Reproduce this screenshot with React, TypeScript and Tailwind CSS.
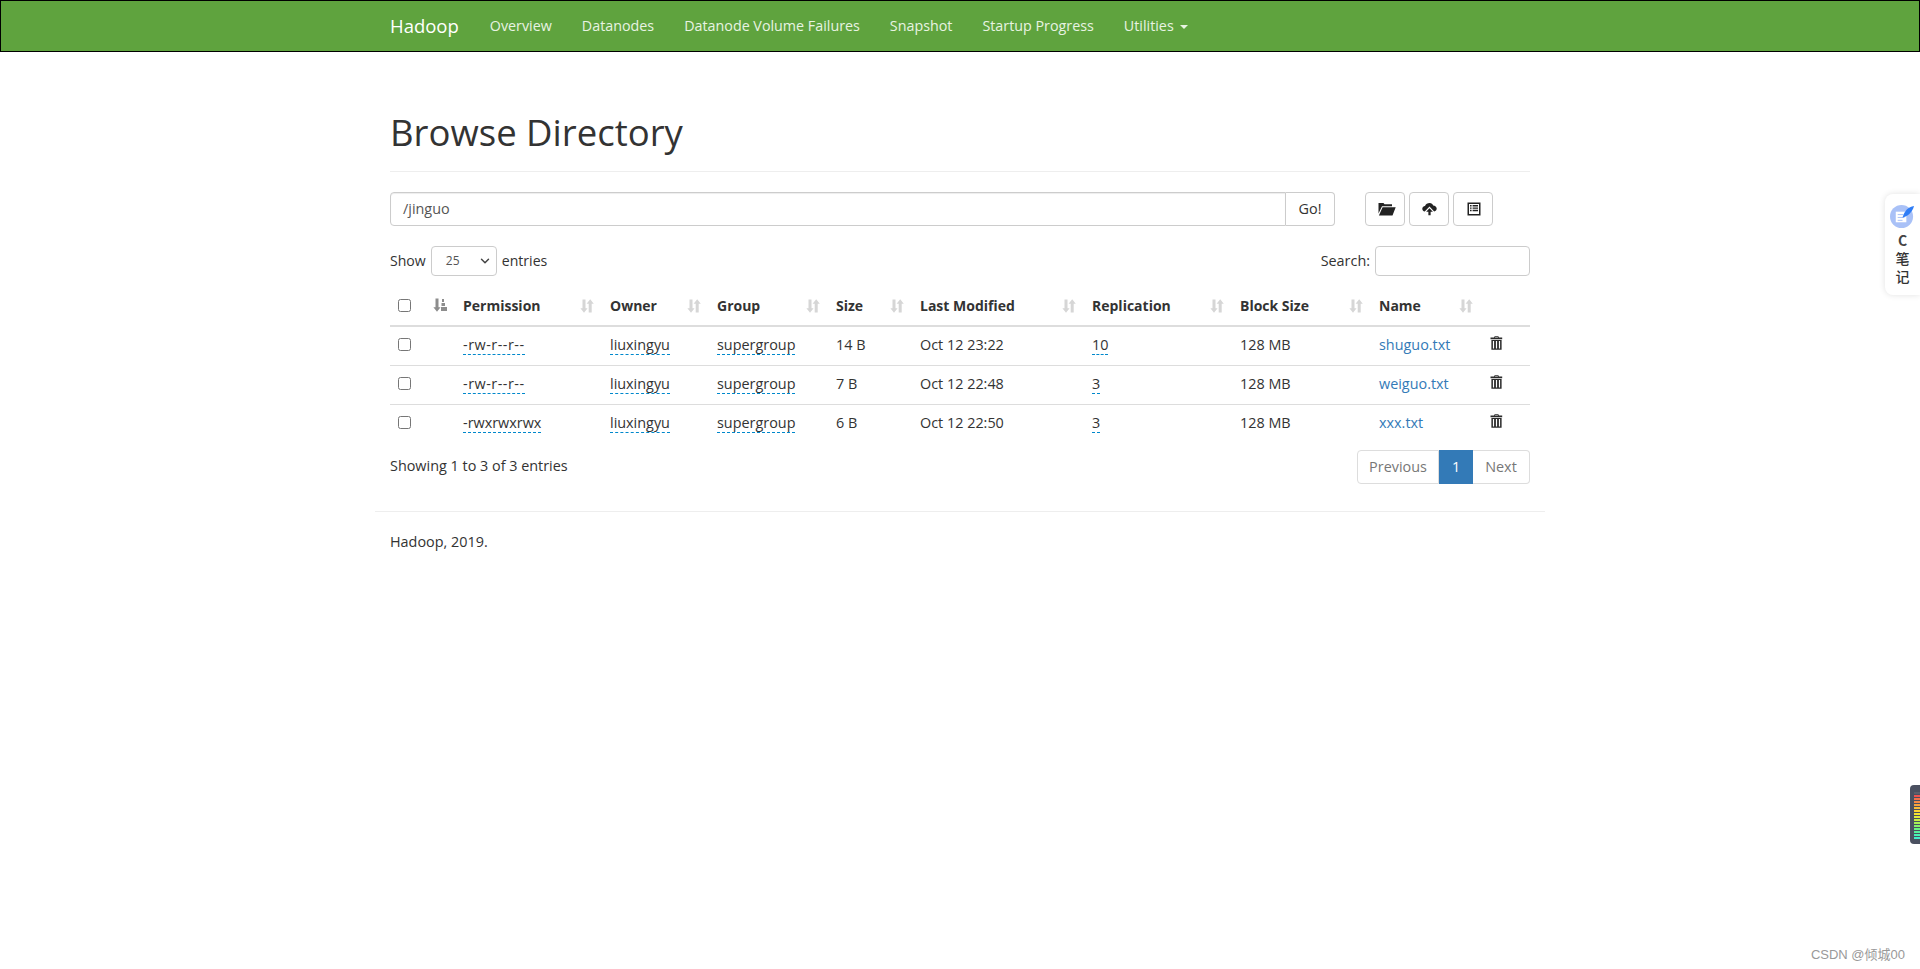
import { ChevronDown } from "lucide-react";

const navLinks = ["Overview", "Datanodes", "Datanode Volume Failures", "Snapshot", "Startup Progress"];

const columns = [
  { label: "Permission", width: "w-[147px]" },
  { label: "Owner", width: "w-[107px]" },
  { label: "Group", width: "w-[119px]" },
  { label: "Size", width: "w-[84px]" },
  { label: "Last Modified", width: "w-[172px]" },
  { label: "Replication", width: "w-[148px]" },
  { label: "Block Size", width: "w-[139px]" },
  { label: "Name", width: "w-[110px]" },
];

const files = [
  { perm: "-rw-r--r--", permClass: "tracking-[0.5px]", size: "14 B", date: "Oct 12 23:22", repl: "10", name: "shuguo.txt" },
  { perm: "-rw-r--r--", permClass: "tracking-[0.5px]", size: "7 B", date: "Oct 12 22:48", repl: "3", name: "weiguo.txt" },
  { perm: "-rwxrwxrwx", permClass: "", size: "6 B", date: "Oct 12 22:50", repl: "3", name: "xxx.txt" },
];

const meterColors = [
  "bg-[#5a5f6c]", "bg-[#f0524f]", "bg-[#f2704a]", "bg-[#f58a45]", "bg-[#f7a33f]", "bg-[#f9bd38]",
  "bg-[#fbd432]", "bg-[#f6e52f]", "bg-[#e3ee38]", "bg-[#c6f044]", "bg-[#a6f155]", "bg-[#86f26a]",
  "bg-[#6af282]", "bg-[#55f29b]", "bg-[#48f2b4]", "bg-[#40f0c8]",
];

const SortIcon = () => (
  <svg viewBox="0 0 14 14" className="h-[14px] w-[14px] shrink-0 text-[#d6d6d6]" fill="currentColor">
    <path d="M2.500 0.500h3v8.700h2.100L4 13.800 0.400 9.200h2.100zM10.200 0.200l3.600 4.600h-2.100v8.700h-3V4.800H6.600z" />
  </svg>
);

const SortActiveIcon = () => (
  <svg viewBox="0 0 15 14" className="h-[14px] w-[15px] text-[#8d8d8d]" fill="currentColor">
    <path d="M2.500 0.500h3v8.700h2.100L4 13.800 0.400 9.200h2.100zM9 1h2v3H9zM8.500 5h3.500v3H8.500zM8 9h6v4H8z" />
  </svg>
);

const FolderOpenIcon = () => (
  <svg viewBox="0 0 18 14" className="h-[14px] w-[18px] text-[#222]" fill="currentColor">
    <path d="M0.500 1h5l1 1.300h7.500v1.900H4L0.500 11.500zM4.600 5.200H17.700L14.500 13.500H0.900z" />
  </svg>
);

const CloudUploadIcon = () => (
  <svg viewBox="0 0 16 14" className="h-[14px] w-[15px] text-[#222]" fill="currentColor">
    <path d="M8.200 0.600c1.900 0 3.200 1.100 3.700 2.600 2.100 0 3.800 1.500 3.800 3.300 0 1.500-1.100 2.800-2.700 3.200L8 4.400 2.900 9.700C1.300 9.300 0.300 8.200 0.300 6.700c0-1.600 1.200-2.900 2.900-3 0.600-1.800 2.800-3.100 5-3.100z" />
    <path d="M8 6.200l3.600 3.800H9.200v3.700H6.800V10H4.400z" />
  </svg>
);

const ListAltIcon = () => (
  <svg viewBox="0 0 14 14" className="h-[14px] w-[14px] text-[#222]" fill="currentColor">
    <path fillRule="evenodd" d="M0.500 0.500h13v13h-13zM2 2v10h10V2zM3 3h1.600v1.400H3zM5.600 3H11v1.400H5.600zM3 5.400h1.600v1.400H3zM5.600 5.400H11v1.400H5.600zM3 7.800h1.600v1.400H3zM5.600 7.800H11v1.400H5.600z" />
  </svg>
);

const TrashIcon = () => (
  <svg viewBox="0 0 13 14" className="h-[14px] w-[13px] text-[#2b2b2b]" fill="currentColor">
    <path fillRule="evenodd" d="M4.600 0.200h3.800l0.500 1.300h3.300v1.700H0.500V1.500h3.600zM5.200 0.900l-0.200 0.600h3l-0.200-0.600z" />
    <path fillRule="evenodd" d="M1.400 3.900h10.200v9.900H1.400zM2.900 5v7.600h1.200V5zM5.900 5v7.600h1.200V5zM8.900 5v7.600h1.200V5z" />
  </svg>
);

const Dashed = ({ text, className = "" }: { text: string; className?: string }) => (
  <span className={`border-b border-dashed border-[#0088cc] ${className}`}>{text}</span>
);

const App = () => {
  return (
    <div className="relative h-[969px] overflow-hidden bg-white font-['Open_Sans',sans-serif] text-[14.4px] leading-5 text-[#333]">
      <nav className="h-[52px] border border-black bg-[#5fa33e]">
        <div className="mx-auto flex h-[50px] w-[1170px] items-center px-[15px]">
          <span className="mr-[31px] text-[18.5px] text-white">Hadoop</span>
          <div className="flex items-center gap-[30px] text-[14.3px] text-[#e8f3e2]">
            {navLinks.map((link) => (
              <a key={link}>{link}</a>
            ))}
            <a className="flex items-center gap-[6px]">
              Utilities
              <span className="mt-[2px] border-x-4 border-t-4 border-x-transparent border-t-[#e8f3e2]" />
            </a>
          </div>
        </div>
      </nav>

      <main className="mx-auto w-[1170px] px-[15px]">
        <div className="mt-[60px] h-[60px] border-b border-[#eee]">
          <h1 className="text-[36.5px] leading-[40px] text-[#333]">Browse Directory</h1>
        </div>

        <div className="mt-[20px] flex h-[34px]">
          <div className="flex w-[945px]">
            <div className="flex flex-1 items-center rounded-l border border-[#ccc] px-3 pb-[1px] text-[#555] shadow-[inset_0_1px_1px_rgba(0,0,0,0.075)]">
              /jinguo
            </div>
            <div className="flex w-[49px] items-center justify-center rounded-r border border-l-0 border-[#ccc] pb-[1px]">Go!</div>
          </div>
          <div className="ml-[30px] flex gap-1">
            <div className="flex w-10 items-center justify-center rounded border border-[#ccc] pl-[3px]"><FolderOpenIcon /></div>
            <div className="flex w-10 items-center justify-center rounded border border-[#ccc]"><CloudUploadIcon /></div>
            <div className="flex w-10 items-center justify-center rounded border border-[#ccc] pl-[2px]"><ListAltIcon /></div>
          </div>
        </div>

        <div className="mt-5 flex h-[30px] items-center justify-between">
          <div className="flex items-center pb-[1px] text-[14.1px]">
            Show
            <div className="relative mx-[5px] flex h-[30px] w-[66px] items-center rounded border border-[#ccc] pl-[14px] text-xs text-[#555]">
              25
              <ChevronDown className="absolute right-[4px] top-[7px] h-[14px] w-[14px] text-[#444]" strokeWidth={2.5} />
            </div>
            entries
          </div>
          <div className="flex items-center gap-[5px]">
            Search:
            <div className="h-[30px] w-[155px] rounded border border-[#ccc]" />
          </div>
        </div>

        <table className="mt-[14px] w-[1140px] table-fixed border-collapse">
          <colgroup>
            <col className="w-[35px]" />
            <col className="w-[30px]" />
            {columns.map((c) => (
              <col key={c.label} className={c.width} />
            ))}
            <col className="w-[49px]" />
          </colgroup>
          <thead>
            <tr className="h-[36px] border-b-2 border-[#ddd]">
              <th className="pb-[5px] pl-2 text-left"><input type="checkbox" className="block" /></th>
              <th className="pb-[5px] pl-[8px] text-left"><SortActiveIcon /></th>
              {columns.map((c) => (
                <th key={c.label} className="px-2 pb-[3px] text-left text-[14px] font-bold">
                  <div className="flex items-center justify-between">
                    {c.label}
                    <SortIcon />
                  </div>
                </th>
              ))}
              <th />
            </tr>
          </thead>
          <tbody>
            {files.map((f, i) => (
              <tr key={f.name} className={i < 2 ? "h-[39px] border-b border-[#ddd]" : "h-[39px]"}>
                <td className="pb-[2px] pl-2"><input type="checkbox" className="block" /></td>
                <td />
                <td className="px-2 pb-[2px]"><Dashed text={f.perm} className={f.permClass} /></td>
                <td className="px-2 pb-[2px]"><Dashed text="liuxingyu" /></td>
                <td className="px-2 pb-[2px]"><Dashed text="supergroup" /></td>
                <td className="px-2 pb-[2px]">{f.size}</td>
                <td className="px-2 pb-[2px]">{f.date}</td>
                <td className="px-2 pb-[2px]"><Dashed text={f.repl} /></td>
                <td className="px-2 pb-[2px]">128 MB</td>
                <td className="px-2 pb-[2px] text-[#337ab7]">{f.name}</td>
                <td className="pb-[5px] pl-[9px]"><TrashIcon /></td>
              </tr>
            ))}
          </tbody>
        </table>

        <div className="mt-[7px] flex items-start justify-between">
          <div className="mt-[6px]">Showing 1 to 3 of 3 entries</div>
          <div className="flex h-[34px] text-[#777]">
            <div className="flex w-[82px] items-center justify-center rounded-l border border-[#ddd]">Previous</div>
            <div className="flex w-[34px] items-center justify-center bg-[#337ab7] text-white">1</div>
            <div className="flex w-[57px] items-center justify-center rounded-r border border-l-0 border-[#ddd]">Next</div>
          </div>
        </div>
      </main>

      <footer className="mx-auto mt-[27px] w-[1170px] border-t border-[#eee] px-[15px] pt-[20px]">
        Hadoop, 2019.
      </footer>

      <div className="absolute right-0 top-[194px] flex h-[101px] w-[35px] flex-col items-center rounded-l-lg bg-white pt-[10px] shadow-[0_0_6px_rgba(0,0,0,0.12)]">
        <svg viewBox="0 0 26 26" className="h-[25px] w-[25px]">
          <circle cx="12" cy="13" r="12" fill="#a9c1f7" />
          <path d="M6 8h11v11H6z" fill="#ffffff" />
          <path d="M8 11h6M8 14h7M8 17h5" stroke="#a9c1f7" strokeWidth="1" />
          <path d="M25 2c-6 1-10 5-12 12 5-1 10-5 12-12z" fill="#2f7df6" />
        </svg>
        <span className="mt-[2px] font-['Noto_Sans_CJK_SC',sans-serif] text-sm leading-[18px] font-bold text-[#444]">C</span>
        <span className="font-['Noto_Sans_CJK_SC',sans-serif] text-sm leading-[18px] font-medium text-[#333]">笔</span>
        <span className="font-['Noto_Sans_CJK_SC',sans-serif] text-sm leading-[18px] font-medium text-[#333]">记</span>
      </div>

      <div className="absolute right-0 top-[785px] flex h-[59px] w-[10px] flex-col gap-[1px] rounded-l bg-[#4a5060] pl-[4px] pt-[7px]">
        {meterColors.map((color, i) => (
          <span key={i} className={`h-[2px] w-[6px] ${color}`} />
        ))}
      </div>

      <div className="absolute right-[15px] top-[945px] font-['Liberation_Sans','Noto_Sans_CJK_SC',sans-serif] text-[13px] text-[#999]">
        CSDN @倾城00
      </div>
    </div>
  );
};

export default App;
